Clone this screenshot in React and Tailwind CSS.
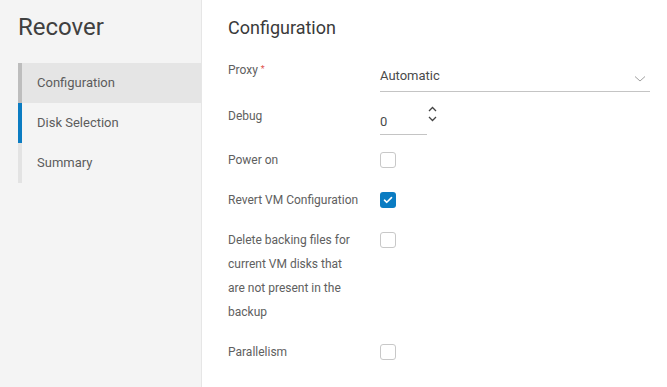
import React from "react";

function Box({ checked }) {
  if (checked) {
    return (
      <div className="w-[16px] h-[16px] rounded-[3px] bg-[#0b7cc2] flex items-center justify-center">
        <svg width="10" height="8" viewBox="0 0 10 8" fill="none">
          <path d="M1.5 4.2 L3.8 6.3 L8.5 1.6" stroke="white" strokeWidth="1.6" strokeLinecap="round" strokeLinejoin="round" />
        </svg>
      </div>
    );
  }
  return <div className="w-[16px] h-[16px] rounded-[3px] border border-[#c8c8c8] bg-white" />;
}

function Row({ label, children, className = "" }) {
  return (
    <div className={"flex " + className}>
      <div className="w-[152px] shrink-0 text-[12px] leading-[24px] text-[#606060]">{label}</div>
      <div className="flex-1">{children}</div>
    </div>
  );
}

export default function App() {
  return (
    <div className="w-[667px] h-[387px] flex bg-white overflow-hidden" style={{ fontFamily: "Roboto, 'Noto Sans', sans-serif" }}>
      <aside className="w-[202px] shrink-0 h-full bg-[#f4f4f4] border-r border-[#e6e6e6] pt-[11px]">
        <h1 className="pl-[18px] text-[24px] leading-[32px] text-[#404040] font-normal">Recover</h1>
        <nav className="mt-[20px] pl-[18px] flex flex-col">
          <div className="h-[40px] flex items-center bg-[#e5e5e5] border-l-4 border-[#bdbdbd] pl-[15px] text-[13px] text-[#5c5c5c]">Configuration</div>
          <div className="h-[40px] flex items-center border-l-4 border-[#0b7cc2] pl-[15px] text-[13px] text-[#5c5c5c]">Disk Selection</div>
          <div className="h-[40px] flex items-center border-l-4 border-[#e3e3e3] pl-[15px] text-[13px] text-[#5c5c5c]">Summary</div>
        </nav>
      </aside>
      <main className="flex-1 pl-[26px] pr-[17px] pt-[14px]">
        <h2 className="text-[18px] leading-[28px] text-[#3a3a3a] font-normal">Configuration</h2>
        <div className="mt-[16px] flex flex-col">
          <Row label={<span>Proxy <span className="text-[#e0524d] text-[9px] align-top relative top-[-1px]">*</span></span>}>
            <div className="h-[34px] pt-[10px] border-b border-[#c4c4c4] flex items-start justify-between pr-[4px]">
              <span className="text-[13px] leading-[16px] text-[#4a4a4a]">Automatic</span>
              <svg width="12" height="8" viewBox="0 0 12 8" className="mt-[7px]" fill="none">
                <path d="M1 1.5 L6 6 L11 1.5" stroke="#a0a0a0" strokeWidth="1" />
              </svg>
            </div>
          </Row>
          <Row label="Debug" className="mt-[12px]">
            <div className="flex items-start">
              <div className="w-[47px] h-[31px] pt-[10px] border-b border-[#c4c4c4] text-[13px] leading-[16px] text-[#4a4a4a]">0</div>
              <div className="ml-[1px] mt-[2px] flex flex-col items-center gap-[4px]">
                <svg width="9" height="6" viewBox="0 0 9 6" fill="none">
                  <path d="M1 5 L4.5 1.5 L8 5" stroke="#444" strokeWidth="1.3" />
                </svg>
                <svg width="9" height="6" viewBox="0 0 9 6" fill="none">
                  <path d="M1 1 L4.5 4.5 L8 1" stroke="#444" strokeWidth="1.3" />
                </svg>
              </div>
            </div>
          </Row>
          <Row label="Power on" className="mt-[13px]">
            <div className="pt-[4px]"><Box /></div>
          </Row>
          <Row label="Revert VM Configuration" className="mt-[16px]">
            <div className="pt-[4px]"><Box checked /></div>
          </Row>
          <Row label={<span>Delete backing files for<br />current VM disks that<br />are not present in the<br />backup</span>} className="mt-[16px]">
            <div className="pt-[4px]"><Box /></div>
          </Row>
          <Row label="Parallelism" className="mt-[16px]">
            <div className="pt-[4px]"><Box /></div>
          </Row>
        </div>
      </main>
    </div>
  );
}
